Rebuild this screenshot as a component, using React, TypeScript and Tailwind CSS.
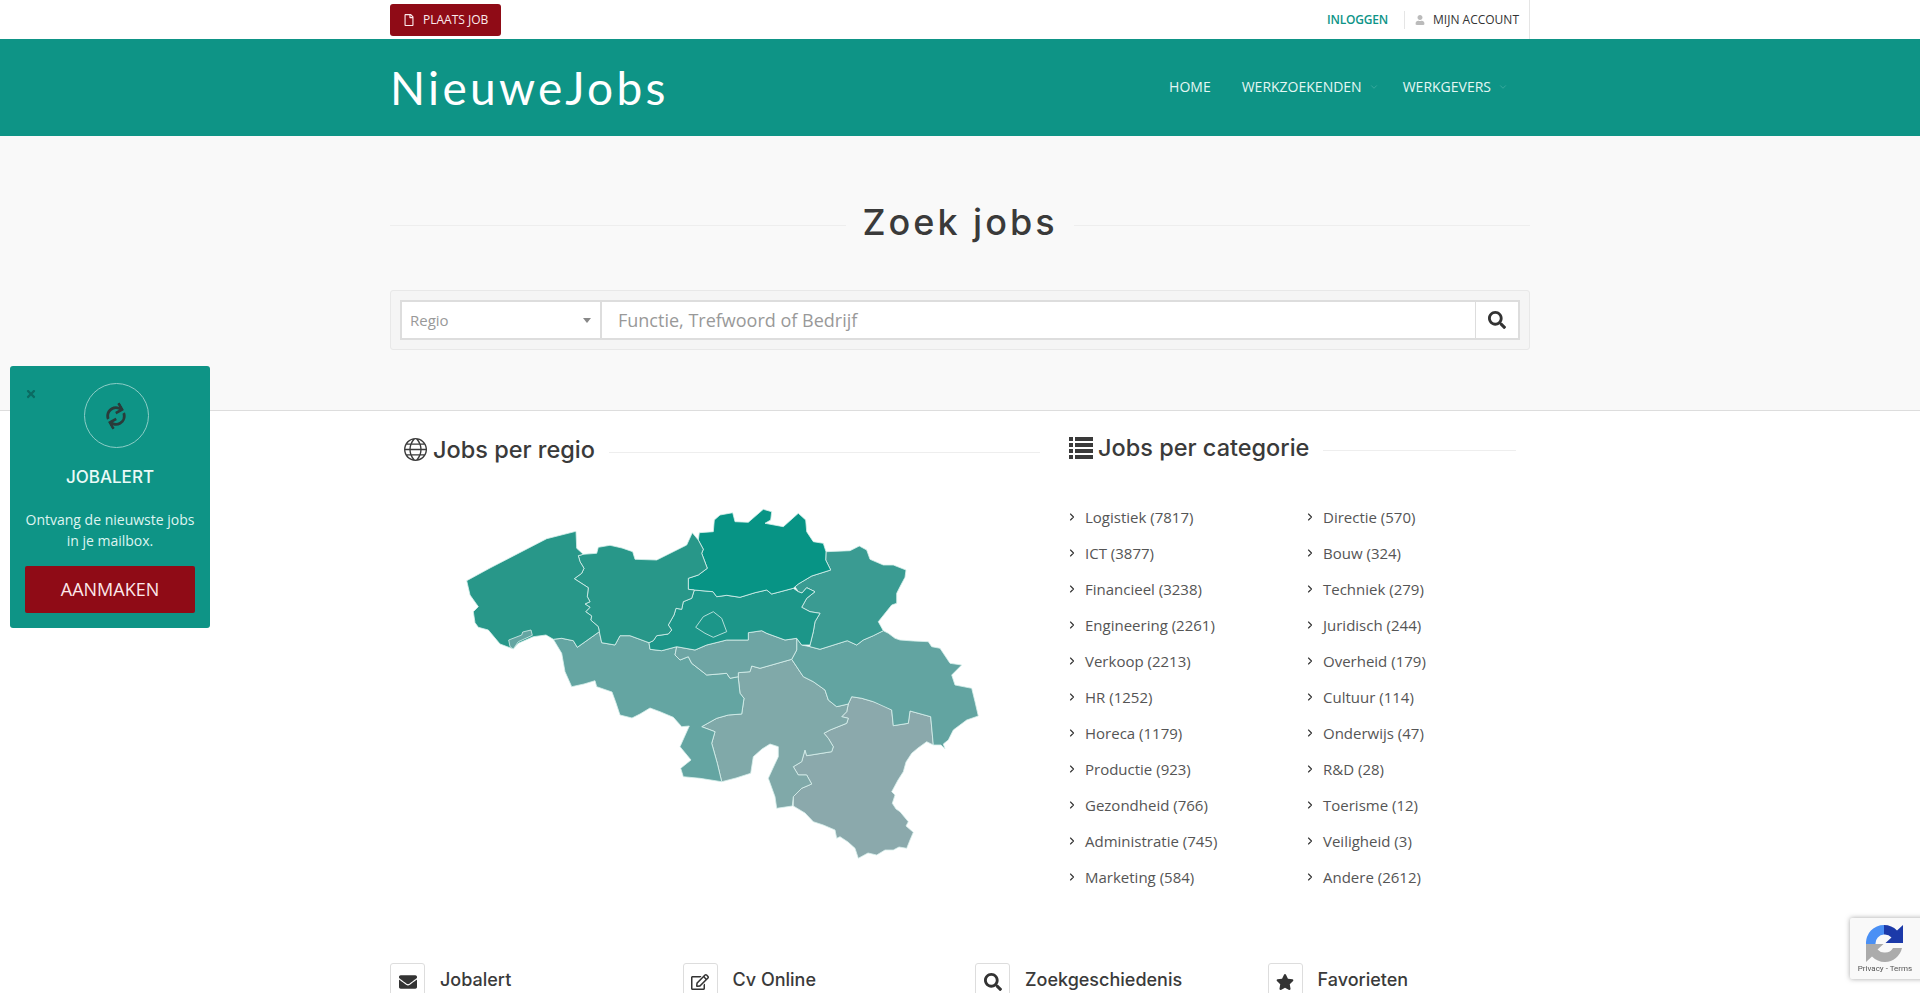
import React from "react";
import { ChevronDown, ChevronRight } from "lucide-react";
import { FaEnvelope, FaRegEdit, FaRegFile, FaSearch, FaStar, FaSync, FaTimes, FaUser } from "react-icons/fa";
import { TfiWorld } from "react-icons/tfi";

const heading = { fontFamily: "Inter, sans-serif" };

const left = [
  ["Logistiek", 7817], ["ICT", 3877], ["Financieel", 3238], ["Engineering", 2261], ["Verkoop", 2213], ["HR", 1252],
  ["Horeca", 1179], ["Productie", 923], ["Gezondheid", 766], ["Administratie", 745], ["Marketing", 584],
];
const right = [
  ["Directie", 570], ["Bouw", 324], ["Techniek", 279], ["Juridisch", 244], ["Overheid", 179], ["Cultuur", 114],
  ["Onderwijs", 47], ["R&D", 28], ["Toerisme", 12], ["Veiligheid", 3], ["Andere", 2612],
];

const regions = [
  { name: "Luxemburg", fill: "#8ba9ac", points: "851.7,696.7 861.7,698.3 873.3,701.7 883,705 891.7,710 893.3,725.7 908.3,723.3 910,711 930.7,716.7 933.3,745 926.7,741.7 918,748 911.7,753.3 906,762 903.3,771.7 898,780 891.7,791.7 895,795 892.3,803.3 896,809 900,811.7 908.3,821.7 906,826 913.3,832.3 910,840 906.7,848.3 899,847 893.3,850 885,850 876.7,855 868,853 858.3,858.3 855,848.3 848,842 840,836.7 836.7,838.3 835,830 823.3,825 813.3,821.7 805,813 793.3,806 793.3,796.7 801.7,788.3 811.7,784 806.7,775 798.3,775 793.3,766.7 801.7,761.7 805,750 806.7,755.7 831.7,751.7 833.3,746.7 828.3,738.3 824,733.3 830,730 846.7,723.3 848.3,718.3 841.7,716.7 846.7,711.7 848.3,704" },
  { name: "Namen", fill: "#80a9a9", points: "791.7,659.3 803.3,676.7 813.3,681.7 825,690 828.3,700 836.7,706.7 848.3,704 846.7,711.7 841.7,716.7 848.3,718.3 846.7,723.3 830,730 824,733.3 828.3,738.3 833.3,746.7 831.7,751.7 806.7,755.7 805,750 801.7,761.7 793.3,766.7 798.3,775 806.7,775 811.7,784 801.7,788.3 793.3,796.7 792.3,806 776.7,808.3 775,796.7 768.3,778.3 773,768 778.3,756.7 778.3,746.7 770,744 762,749 753.3,756.7 750.7,773.3 736,778 721.7,781.7 717.3,763.3 711.7,743.3 715,731.7 701.7,726.7 716.7,718.3 728.3,715 741.7,714 744,698.3 740,693.3 738.3,678.3 738.3,672.7 750,671.7 751.7,666 760,668.3" },
  { name: "Luik", fill: "#62a4a1", points: "796.7,638.3 801.7,645 810,646.7 820,649.3 847.3,640.7 856.7,645 863.3,640 873.3,635.7 883.3,630.7 888.3,633.3 895,638.3 900,640 913.3,641 928.3,641.7 931.7,646.7 940,648.3 950,663.3 961.7,665 951.7,675 955,685 971.7,688.3 975,701.7 978.3,716 966.7,720 953.3,730 948.3,740 943.3,744 945,749 941,745 933.3,745 930.7,716.7 910,711 908.3,723.3 893.3,725.7 891.7,710 873.3,701.7 861.7,698.3 851.7,696.7 848.3,704 836.7,706.7 828.3,700 825,690 813.3,681.7 803.3,676.7 791.7,659.3 796.7,650" },
  { name: "Henegouwen", fill: "#64a5a2", points: "553.3,639.3 561.7,638.3 573.3,640.7 577.3,647.3 599.3,631.7 601.7,642.7 615,645 620,635.7 630,635.7 649,642.7 650,649.3 661.7,650.7 676.7,646.7 675,655 680,660 688.3,656.7 691.7,663.3 706.7,675 726.7,673.3 730,678.3 738.3,676.7 738.3,678.3 740,693.3 744,698.3 741.7,714 728.3,715 716.7,718.3 701.7,726.7 715,731.7 711.7,743.3 717.3,763.3 721.7,781.7 700,778.3 683.3,776.7 680.7,768.3 691,760 680,746.7 689.3,726 681.7,726.7 673.3,717.3 660,711.7 650,708 640,714 632,718 620,715 616,703 612,692 596.7,686.7 595,680.7 584,684 571.7,686.7 565,671.7 561.7,653.3" },
  { name: "Waals-Brabant", fill: "#6ea5a4", points: "676.7,646.7 695,650 706.7,645 726.7,640 740,640 748.3,640 748.3,632.7 761.7,630.7 766.7,633.3 785,640 796.7,638.3 796.7,650 791.7,659.3 760,668.3 751.7,666 750,671.7 738.3,672.7 738.3,676.7 730,678.3 726.7,673.3 706.7,675 691.7,663.3 688.3,656.7 680,660 675,655" },
  { name: "Limburg", fill: "#3a9b92", points: "826,551.7 850,550.7 859.3,546 866.7,550 870,559.3 883.3,565 893.3,565 906,570 905,577.3 900,586.7 896.7,593.3 896.7,603.3 891.7,605 878.3,621.7 883.3,630.7 873.3,635.7 863.3,640 856.7,645 847.3,640.7 820,649.3 810,646.7 810,645 813.3,631.7 815,621.7 820,613.3 810,611.7 801.7,607.3 806.7,598.3 815,591.7 806.7,587.7 802,593 798.3,591.7 795,586.7 798.3,584 811.7,576 830.7,570 825.7,560" },
  { name: "Vlaams-Brabant", fill: "#1c9689", points: "694.3,590 713,591.7 716.7,596.7 726.7,595.3 740,597.3 755,592.7 766.7,590 771.7,594 793.3,588.3 798.3,591.7 802,593 806.7,587.7 815,591.7 806.7,598.3 801.7,607.3 810,611.7 820,613.3 815,621.7 813.3,631.7 810,645 801.7,645 796.7,638.3 785,640 766.7,633.3 761.7,630.7 748.3,632.7 748.3,640 726.7,640 706.7,645 695,650 676.7,646.7 661.7,650.7 650,649.3 649,642.7 653.3,640.7 656.7,635.7 668.3,634 671.7,630 668.3,625 674,615 676,608.3 681.7,609.3 683.3,601.7 691.7,598.3" },
  { name: "Brussel", fill: "#1c9689", points: "695.7,627.3 703.3,616.7 713.3,611.7 721.7,618.3 726.7,631.7 713.3,637.3 705,633.3" },
  { name: "Antwerpen", fill: "#079485", points: "699.3,532.7 713.3,531.7 714.3,520 720,515 732.7,512.7 735,521.7 748.3,522.3 763.3,509.3 771.7,511.7 770.7,520 765,523.3 783.3,526.7 798.3,513.3 805.7,520 806.7,531.7 813.3,541.7 823.3,543.3 826,551.7 825.7,560 830.7,570 811.7,576 798.3,584 793.3,588.3 771.7,594 766.7,590 755,592.7 740,597.3 726.7,595.3 716.7,596.7 713,591.7 694.3,590 688.3,589.3 688.3,578.3 698.3,575 707.3,568.3 701.7,553.3 703.3,549.3 698.3,540" },
  { name: "Oost-Vlaanderen", fill: "#289789", points: "583.3,554.3 596.7,553.3 598.3,547.3 610,545.3 622,548 632.7,551.7 635,559.3 656.7,560 686.7,545 692.3,532.7 698.3,540 703.3,549.3 701.7,553.3 707.3,568.3 698.3,575 688.3,578.3 688.3,589.3 694.3,590 691.7,598.3 683.3,601.7 681.7,609.3 676,608.3 674,615 668.3,625 671.7,630 668.3,634 656.7,635.7 653.3,640.7 649,642.7 630,635.7 620,635.7 615,645 601.7,642.7 599.3,631.7 598.3,626.7 590.7,620 591.7,616 585.7,611.7 590,607.3 585,604 590,601.7 587.3,596.7 588.3,587.7 574.3,578.7 581.7,573.3 584,568.3 580,561.7 578.3,555.7" },
  { name: "West-Vlaanderen", fill: "#289789", points: "466.7,580.7 490,568 546.7,538.7 576,531.3 576.7,548.3 583.3,554.3 578.3,555.7 580,561.7 584,568.3 581.7,573.3 574.3,578.7 588.3,587.7 587.3,596.7 590,601.7 585,604 590,607.3 585.7,611.7 591.7,616 590.7,620 598.3,626.7 599.3,631.7 577.3,647.3 573.3,640.7 561.7,638.3 553.3,639.3 546,635 533.3,636.7 518.3,643.3 513.3,649 500,644 488.3,630 478.3,627.3 475,622.7 473.3,611.7 478.3,606.7 470,595" },
  { name: "Komen", fill: "#64a5a2", points: "508.7,640 521.7,635 522.7,632 531,630 532.3,635.3 518.3,641.7 513.3,649 510,646.7" },
];

const shortcuts: [React.ReactNode, string][] = [
  [<FaEnvelope className="text-[18px]" />, "Jobalert"],
  [<FaRegEdit className="text-[18px]" />, "Cv Online"],
  [<FaSearch className="text-[18px]" />, "Zoekgeschiedenis"],
  [<FaStar className="text-[18px]" />, "Favorieten"],
];

const CategoryList = ({ items, width }: { items: (string | number)[][]; width: string }) => (
  <ul className={width}>
    {items.map(([name, count]) => (
      <li key={name} className="h-9 flex items-center text-[15px] text-[#555]">
        <ChevronRight size={12} strokeWidth={2.2} className="text-[#333] shrink-0 -ml-[3px] mr-[7px]" />
        {name} ({count})
      </li>
    ))}
  </ul>
);

const ListIcon = () => (
  <svg viewBox="0 0 24 22" className="w-6 h-[22px] mr-[5px] fill-current">
    <rect x="0" y="0" width="4" height="4" />
    <rect x="6" y="0" width="18" height="4" />
    <rect x="0" y="6" width="4" height="4" />
    <rect x="6" y="6" width="18" height="4" />
    <rect x="0" y="12" width="4" height="4" />
    <rect x="6" y="12" width="18" height="4" />
    <rect x="0" y="18" width="4" height="4" />
    <rect x="6" y="18" width="18" height="4" />
  </svg>
);

const RecaptchaLogo = () => (
  <svg viewBox="0 0 37 37" className="w-[37px] h-[37px] -ml-[2px]">
    <path d="M19 37 A18 18 0 0 1 6 31.5 L0 37 V19 H17.5 L11.5 24.5 A9 9 0 0 0 19 27.5 Z" fill="#ababab" />
    <path d="M19 37 V27.5 A9 9 0 0 0 27 23 H36 A18 18 0 0 1 19 37 Z" fill="#ababab" />
    <path d="M0 19 H9.5 A9 9 0 0 1 18 9.5 V0 A18 18 0 0 0 0 19 Z" fill="#4a90f5" />
    <path d="M18 0 A18 18 0 0 1 31 5.5 L37 0 V18 H19.5 L25.5 12.5 A9 9 0 0 0 18 9.5 Z" fill="#1c3aa9" />
  </svg>
);

export default function App() {
  return (
    <div className="h-[993px] overflow-hidden bg-white" style={{ fontFamily: "'Open Sans', sans-serif" }}>
      <div className="h-[39px] bg-white">
        <div className="w-[1140px] mx-auto h-full flex items-center justify-between border-r border-[#e5e5e5] pr-[10px]">
          <a className="h-8 w-[111px] flex items-center bg-[#8f0b16] rounded-[3px] pl-[13px] text-xs text-[#fbeaec] uppercase">
            <FaRegFile className="text-[12px] mr-2" />
            Plaats job
          </a>
          <div className="flex items-center text-xs">
            <a className="font-semibold tracking-[-0.2px] text-[#0d9488] uppercase pr-4">Inloggen</a>
            <span className="h-[18px] border-l border-[#e5e5e5] mr-[10px]" />
            <FaUser className="text-[10px] text-[#bbb] mr-[8px]" />
            <a className="text-[#333] uppercase">Mijn account</a>
          </div>
        </div>
      </div>

      <header className="h-[97px] bg-[#0e9486]">
        <div className="w-[1140px] mx-auto h-full flex items-center justify-between">
          <a className="text-[46px] leading-none text-white tracking-[3.3px] mt-[1px]" style={{ fontFamily: "Lato, sans-serif" }}>
            NieuweJobs
          </a>
          <nav className="flex items-center text-sm text-[#e4f7f4] uppercase -mt-[2px] pr-[22px]">
            <a className="mr-[31px]">Home</a>
            <a>Werkzoekenden</a>
            <ChevronDown size={10} strokeWidth={1.2} className="text-[#5fbdb2] ml-[7px] mr-[24px]" />
            <a>Werkgevers</a>
            <ChevronDown size={10} strokeWidth={1.2} className="text-[#5fbdb2] ml-[7px]" />
          </nav>
        </div>
      </header>

      <section className="h-[275px] bg-[#f9f9f9] border-b border-[#ddd]">
        <div className="w-[1140px] mx-auto">
          <div className="flex items-center pt-[18px] h-[154px]">
            <div className="flex-1 h-px bg-[#eee] mt-[6px]" />
            <h1 className="px-4 text-[36px] leading-[44px] font-medium text-[#3a3a3a] tracking-[3px]" style={heading}>Zoek jobs</h1>
            <div className="flex-1 h-px bg-[#eee] mt-[6px]" />
          </div>
          <div className="h-[60px] bg-[#f5f5f5] border border-[#e8e8e8] rounded-[3px] px-[9px] py-[9px]">
            <div className="h-10 flex bg-white border-2 border-[#ddd]">
              <div className="w-[200px] flex items-center justify-between pl-2 pr-[9px] border-r-2 border-[#ddd]">
                <span className="text-[15px] text-[#999]">Regio</span>
                <span className="border-x-[4px] border-x-transparent border-t-[5px] border-t-[#888]" />
              </div>
              <input className="flex-1 px-4 text-[18px] outline-none placeholder:text-[#999]" placeholder="Functie, Trefwoord of Bedrijf" />
              <button className="w-[43px] flex items-center justify-center border-l border-[#ddd] text-[#333]">
                <FaSearch className="text-[18px]" />
              </button>
            </div>
          </div>
        </div>
      </section>

      <main className="w-[1140px] mx-auto">
        <div className="flex">
          <div className="w-[679px] pr-[29px] pl-[14px] pt-5">
            <div className="h-[38px] flex items-center text-[#3a3a3a]">
              <TfiWorld className="text-[23px] mr-[6px] -mt-[2px]" />
              <h2 className="text-[23.5px] font-medium" style={heading}>Jobs per regio</h2>
              <div className="flex-1 h-px bg-[#eee] ml-[14px] mt-[4px]" />
            </div>
            <svg viewBox="460 505 530 360" className="w-[530px] h-[360px] mt-9 ml-[56px]">
              {regions.map((r) => (
                <polygon key={r.name} points={r.points} fill={r.fill} stroke="#d8f0ec" strokeWidth="0.8" strokeLinejoin="round" />
              ))}
            </svg>
          </div>
          <div className="w-[447px] pt-[18px]">
            <div className="h-[38px] flex items-center text-[#3a3a3a]">
              <ListIcon />
              <h2 className="text-[23.5px] font-medium" style={heading}>Jobs per categorie</h2>
              <div className="flex-1 h-px bg-[#eee] ml-[14px] mt-[4px]" />
            </div>
            <div className="flex mt-8">
              <CategoryList items={left} width="w-[238px]" />
              <CategoryList items={right} width="w-[200px]" />
            </div>
          </div>
        </div>
        <div className="mt-[68px] w-[1170px] grid grid-cols-4">
          {shortcuts.map(([icon, label]) => (
            <div key={label} className="flex items-start h-9">
              <span className="w-[35px] h-[36px] flex items-center justify-center border border-[#ddd] rounded-t-[3px] text-[#333] pt-[2px]">{icon}</span>
              <span className="ml-[15px] text-[18px] text-[#3a3a3a] font-medium mt-[3px]" style={heading}>{label}</span>
            </div>
          ))}
        </div>
      </main>

      <aside className="fixed left-[10px] top-[366px] w-[200px] h-[262px] bg-[#0e9486] rounded-[3px] flex flex-col items-center text-white">
        <FaTimes className="absolute left-[15px] top-[22px] text-[12px] text-[#0b6b62]" />
        <div className="mt-[17px] ml-[12px] w-[65px] h-[65px] rounded-full border border-[#8ccdc6] flex items-center justify-center text-[#2a3b3a]">
          <FaSync className="text-[20px] -rotate-[30deg]" />
        </div>
        <h3 className="mt-[17px] text-[17px] leading-6 font-medium text-[#eafaf7]" style={heading}>JOBALERT</h3>
        <p className="mt-[20px] text-sm leading-[21px] text-center text-[#dff4f1]">
          Ontvang de nieuwste jobs<br />in je mailbox.
        </p>
        <a className="mt-[15px] w-[170px] h-[47px] flex items-center justify-center bg-[#8f0b16] rounded-[2px] text-[18px] text-[#fde8ea]">AANMAKEN</a>
      </aside>

      <div className="fixed left-[1850px] top-[918px] w-[256px] h-[61px] bg-[#f9f9f9] rounded-[2px] shadow-[0_0_5px_rgba(128,128,128,0.7)]">
        <div className="w-[70px] flex flex-col items-center pt-[7px]">
          <RecaptchaLogo />
          <span className="text-[8px] leading-[10px] text-[#555] mt-[2px] whitespace-nowrap" style={{ fontFamily: "Roboto, sans-serif" }}>Privacy - Terms</span>
        </div>
      </div>
    </div>
  );
}
